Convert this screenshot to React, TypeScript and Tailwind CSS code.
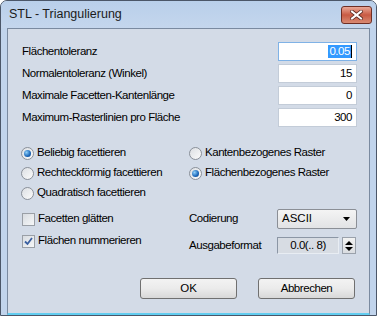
import React from 'react';

// Dialog "STL - Triangulierung" im Vista-Basic-Stil
const rows = [
  { label: 'Flächentoleranz', value: '0.05', focused: true },
  { label: 'Normalentoleranz (Winkel)', value: '15' },
  { label: 'Maximale Facetten-Kantenlänge', value: '0' },
  { label: 'Maximum-Rasterlinien pro Fläche', value: '300' },
];

function Radio({ checked, label }: { checked?: boolean; label: string }) {
  return (
    <div className="flex items-center h-[20px]">
      <span className="w-[13px] h-[13px] rounded-full border border-[#8a9099] bg-gradient-to-br from-[#dcdfe3] to-[#fbfbfb] flex items-center justify-center">
        {checked && (
          <span className="w-[7px] h-[7px] rounded-full bg-[radial-gradient(circle_at_35%_35%,#8fd0fa,#1a66b8_60%,#0d3f80)]" />
        )}
      </span>
      <span className="ml-[3px]">{label}</span>
    </div>
  );
}

function Check({ checked, label }: { checked?: boolean; label: string }) {
  return (
    <div className="flex items-center h-[20px]">
      <span className="w-[13px] h-[13px] border border-[#9a9fa6] bg-gradient-to-br from-[#d8dce1] to-[#f6f7f8] flex items-center justify-center">
        {checked && (
          <svg width="9" height="9" viewBox="0 0 9 9">
            <path d="M1 4.5 L3.5 7 L8 1" fill="none" stroke="#3a5fa0" strokeWidth="1.8" />
          </svg>
        )}
      </span>
      <span className="ml-[3px]">{label}</span>
    </div>
  );
}

export default function App() {
  return (
    <div className="w-[377px] h-[317px] bg-white overflow-hidden font-['Liberation_Sans',Arial,sans-serif] text-[11.5px] tracking-[-0.45px] text-black">
      <div className="h-[316px] rounded-t-[7px] border border-[#4b5668] bg-[#c1d4ec] flex flex-col">
        {/* Titelleiste */}
        <div className="h-[27px] flex items-center justify-between pl-[8px] pr-[4px] rounded-t-[6px] bg-gradient-to-b from-[#b9cfea] to-[#c4d6ed]">
          <span className="text-[12.5px] tracking-normal text-[#1b1b1b]">STL - Triangulierung</span>
          <div className="w-[31px] h-[18px] rounded-[3px] border border-[#6e2e24] bg-gradient-to-b from-[#e9a897] via-[#c85a43] to-[#d88a73] flex items-center justify-center">
            <svg width="13" height="10" viewBox="0 0 13 10">
              <path d="M2 1.5 L11 8.5 M11 1.5 L2 8.5" stroke="#5a2a22" strokeWidth="3.6" strokeLinecap="square" />
              <path d="M2 1.5 L11 8.5 M11 1.5 L2 8.5" stroke="#ffffff" strokeWidth="2" strokeLinecap="square" />
            </svg>
          </div>
        </div>

        {/* Client-Bereich */}
        <div className="flex-1 mx-[6px] border border-[#7a8aa0] border-b-2 border-b-[#62cdf0] bg-[#d3dbe7] pl-[14px] pr-[12px] pt-[13px] flex flex-col">
          {/* Eingabefelder */}
          <div className="flex flex-col gap-[3px]">
            {rows.map((r) => (
              <div key={r.label} className="flex items-center justify-between h-[19px]">
                <span>{r.label}</span>
                <div
                  className={
                    'w-[79px] h-[19px] bg-white border flex items-center justify-end pr-[4px] ' +
                    (r.focused ? 'border-[#7fb2e6]' : 'border-[#c3ccd8]')
                  }
                >
                  {r.focused ? (
                    <span className="flex items-center">
                      <span className="bg-[#3399ff] text-white px-[1px] leading-[13px]">{r.value}</span>
                      <span className="w-px h-[13px] bg-black" />
                    </span>
                  ) : (
                    <span>{r.value}</span>
                  )}
                </div>
              </div>
            ))}
          </div>

          {/* Optionen */}
          <div className="mt-[16px] grid grid-cols-[167px_1fr]">
            <div className="flex flex-col -ml-px">
              <Radio checked label="Beliebig facettieren" />
              <Radio label="Rechteckförmig facettieren" />
              <Radio label="Quadratisch facettieren" />
            </div>
            <div className="flex flex-col">
              <Radio label="Kantenbezogenes Raster" />
              <Radio checked label="Flächenbezogenes Raster" />
            </div>
          </div>

          <div className="mt-[6px] grid grid-cols-[167px_1fr]">
            <div className="flex flex-col gap-[2px]">
              <Check label="Facetten glätten" />
              <Check checked label="Flächen nummerieren" />
            </div>
            <div className="flex flex-col">
              <div className="flex items-center h-[20px]">
                <span className="w-[88px]">Codierung</span>
                <div className="w-[80px] h-[20px] rounded-[2px] border border-[#8b8f96] bg-gradient-to-b from-[#f4f4f4] to-[#e2e3e5] flex items-center justify-between pl-[4px] pr-[6px]">
                  <span className="text-[11.5px] tracking-normal">ASCII</span>
                  <svg width="7" height="4" viewBox="0 0 7 4">
                    <path d="M0 0 H7 L3.5 4 Z" fill="#000" />
                  </svg>
                </div>
              </div>
              <div className="flex items-center h-[17px] mt-[8px]">
                <span className="w-[88px]">Ausgabeformat</span>
                <div className="w-[62px] h-[17px] border border-[#8b96a5] border-r-[#e8edf3] border-b-[#e8edf3] bg-[#d7dce3] flex items-center justify-center">
                  0.0(.. 8)
                </div>
                <div className="ml-[3px] w-[14px] h-[17px] border border-[#9aa1ab] bg-gradient-to-b from-[#f2f2f2] to-[#dadde1] flex flex-col items-center justify-center gap-[2px]">
                  <svg width="8" height="4" viewBox="0 0 8 4">
                    <path d="M0 4 H8 L4 0 Z" fill="#000" />
                  </svg>
                  <svg width="8" height="4" viewBox="0 0 8 4">
                    <path d="M0 0 H8 L4 4 Z" fill="#000" />
                  </svg>
                </div>
              </div>
            </div>
          </div>

          {/* Schaltflächen */}
          <div className="mt-[24px] flex justify-end gap-[21px] mr-[2px]">
            <button className="w-[97px] h-[21px] rounded-[3px] border border-[#707070] bg-gradient-to-b from-[#f3f3f3] via-[#ebebeb] to-[#d8d8d8] tracking-normal">
              OK
            </button>
            <button className="w-[97px] h-[21px] rounded-[3px] border border-[#707070] bg-gradient-to-b from-[#f3f3f3] via-[#ebebeb] to-[#d8d8d8]">
              Abbrechen
            </button>
          </div>
        </div>
      </div>
    </div>
  );
}
